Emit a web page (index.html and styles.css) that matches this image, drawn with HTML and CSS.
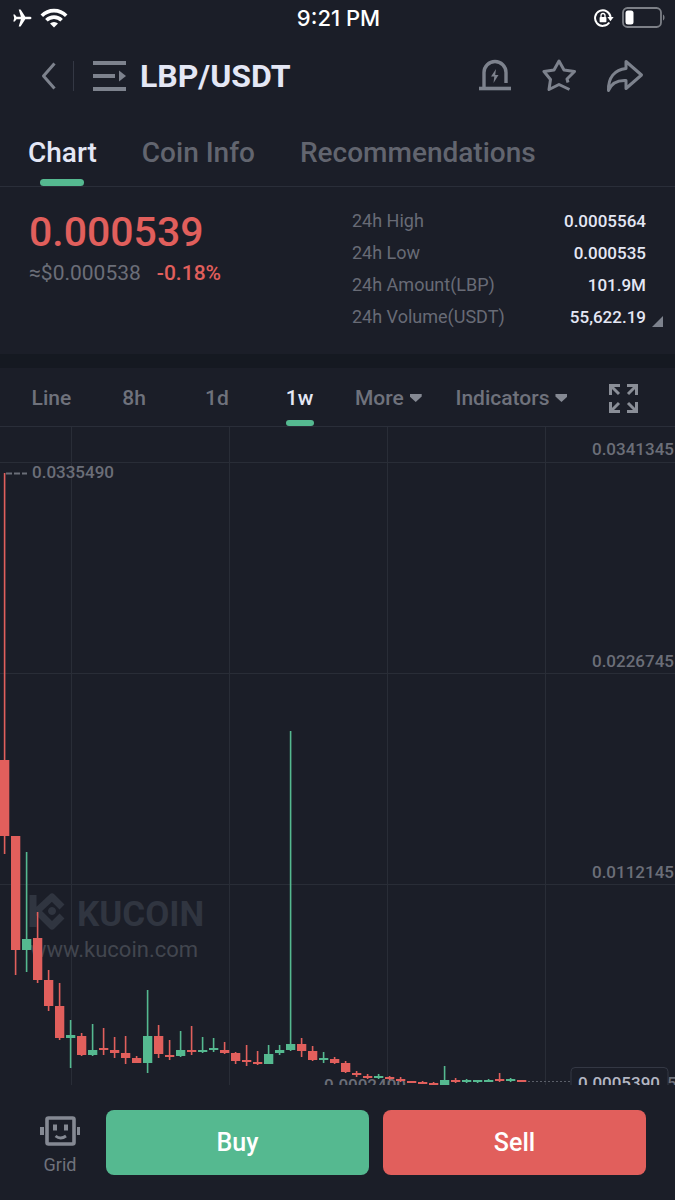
FILE: index.html
```html
<!DOCTYPE html>
<html lang="en">
<head>
    <meta charset="UTF-8">
    <meta name="viewport" content="width=device-width, initial-scale=1.0">
    <title>LBP/USDT</title>
    <link rel="stylesheet" href="styles.css">
</head>
<body>
    <div class="status-bar">
        <div class="status-side">
            <svg width="20" height="20" viewBox="0 0 20 20" fill="#fff"><path d="M19.5 10c0 .9-1 1.300-2 1.300h-4.200L8.600 18.600H6.700l2.200-7.300H4.500l-1.700 2.200H1.300L2.200 10 1.300 6.500h1.500l1.700 2.200h4.400L6.700 1.400h1.900l4.700 7.300h4.200c1 0 2 .4 2 1.300z"/></svg>
            <svg width="28" height="20" viewBox="0 0 28 20" fill="none" stroke="#fff" stroke-width="3.600"><path d="M1.800 7.700a17.300 17.300 0 0 1 24.400 0M6.400 12.300a10.800 10.800 0 0 1 15.200 0"/><path d="M14 19.600l-4-4a5.700 5.700 0 0 1 8 0z" fill="#fff" stroke="none"/></svg>
        </div>
        <div class="clock">9:21 PM</div>
        <div class="status-side right">
            <svg width="20" height="18" viewBox="0 0 20 18"><path d="M15.300 13.500A7.800 7.800 0 1 1 16.600 8" fill="none" stroke="#fff" stroke-width="2"/><path d="M13.400 8h6.200l-3.100 4.200z" fill="#fff"/><rect x="5.600" y="8" width="6.800" height="5.200" rx=".8" fill="#fff"/><path d="M7 8V6.500a2 2 0 0 1 4 0V8" fill="none" stroke="#fff" stroke-width="1.300"/></svg>
            <svg width="43" height="22" viewBox="0 0 43 22"><rect x="1" y="1" width="38" height="19" rx="4.500" fill="none" stroke="#7d8087" stroke-width="1.800"/><rect x="3.500" y="3.500" width="8" height="14" rx="2.500" fill="#fff"/><path d="M41 7.500c2 1 2 5 0 6z" fill="#7d8087"/></svg>
        </div>
    </div>

    <header class="header">
        <button class="icon-btn back" aria-label="Back">
            <svg width="16" height="30" viewBox="0 0 16 30"><path d="M13.500 2.500L2.500 15l11 12.500"/></svg>
        </button>
        <button class="icon-btn pairs" aria-label="Pairs">
            <svg width="34" height="30" viewBox="0 0 34 30"><path d="M0 2h33M0 15h22M0 28h33" stroke-width="4"/><path d="M26 9.500l7 5.500-7 5.500z" class="fill"/></svg>
        </button>
        <h1>LBP/USDT</h1>
        <button class="icon-btn" aria-label="Price alert">
            <svg width="34" height="34" viewBox="0 0 34 34"><path d="M6 29V13.500a11 11 0 0 1 22 0V24" stroke-width="3.400"/><path d="M1 29.500h32" stroke-width="3.600"/><path d="M18 10l-5 7.500h3.300l-.8 6.500 5-8h-3.300z" class="fill"/></svg>
        </button>
        <button class="icon-btn" aria-label="Favourite">
            <svg width="34" height="36" viewBox="0 0 34 36"><path d="M27.500 31.500L17 26.500 7 31.500l1.500-10L2 13.500l10-1.500 5-9 5 9 10.500 1.500-7.500 7.500 1 3.500"/></svg>
        </button>
        <button class="icon-btn" aria-label="Share">
            <svg width="38" height="34" viewBox="0 0 38 34"><path d="M20 2.500L35.500 16 20 29.500V21.500C11 21 5.500 24 2.500 31.500 2 19 8.500 10.500 20 9.500z"/></svg>
        </button>
    </header>

    <nav class="tabs">
        <a href="#" class="active">Chart</a>
        <a href="#">Coin Info</a>
        <a href="#">Recommendations</a>
    </nav>

    <section class="summary">
        <div class="price-box">
            <div class="price">0.000539</div>
            <div class="price-sub">≈$0.000538<span class="change">-0.18%</span></div>
        </div>
        <dl class="stats">
            <div><dt>24h High</dt><dd>0.0005564</dd></div>
            <div><dt>24h Low</dt><dd>0.000535</dd></div>
            <div><dt>24h Amount(LBP)</dt><dd>101.9M</dd></div>
            <div><dt>24h Volume(USDT)</dt><dd class="more">55,622.19</dd></div>
        </dl>
    </section>

    <div class="intervals">
        <button>Line</button>
        <button>8h</button>
        <button>1d</button>
        <button class="active">1w</button>
        <button class="drop">More</button>
        <button class="drop">Indicators</button>
        <button aria-label="Full screen">
            <svg width="29" height="29" viewBox="0 0 29 29" fill="none" stroke="#8a8e97" stroke-width="3"><path d="M1.500 11V1.500H11M2 2l8 8M18 1.500h9.500V11M27 2l-8 8M1.500 18v9.500H11M2 27l8-8M18 27.500h9.500V18M27 27l-8-8"/></svg>
        </button>
    </div>

    <svg class="chart" viewBox="0 0 675 658" role="img" aria-label="Weekly candles">
        <path class="grid-line" d="M0 35.500h675M0 246.500h675M0 457.500h675M71.500 0v658M229.500 0v658M387.500 0v658M545.500 0v658"/>

        <g class="axis">
            <text x="674" y="28" text-anchor="end">0.0341345</text>
            <text x="674" y="240" text-anchor="end">0.0226745</text>
            <text x="674" y="451" text-anchor="end">0.0112145</text>
            <text x="32" y="51">0.0335490</text>
            <text x="324" y="664">0.0002400</text>
            <text x="667" y="662">5</text>
        </g>
        <path class="marker" d="M6 46.500h21"/>

        <g class="watermark">
            <path d="M33 468v32M37 484l15-14 10 10M37 484l15 15 10-10" fill="none" stroke-width="7" stroke-linejoin="round"/>
            <circle cx="52" cy="484" r="3.500"/>
            <text x="77" y="499" class="brand">KUCOIN</text>
            <text x="30" y="530" class="site">www.kucoin.com</text>
        </g>

        <g id="candles"></g>

        <path class="last-line" d="M528 654.500h43"/>
        <rect class="last-box" x="571" y="640.500" width="97" height="30" rx="4"/>
        <text class="last-price" x="578" y="662">0.0005390</text>
    </svg>

    <footer class="actions">
        <button class="grid-btn">
            <svg width="40" height="31" viewBox="0 0 40 31"><rect x="7" y="2" width="27" height="26" rx="1.500" fill="none" stroke="#858993" stroke-width="3.600"/><path d="M0 11h4v8H0zM37 11h3v8h-3zM13 8.500h4v6h-4zM24 8.500h4v6h-4z" fill="#858993"/><path d="M15.500 20q5 4 10.500 0" fill="none" stroke="#858993" stroke-width="2.800"/></svg>
            <span>Grid</span>
        </button>
        <button class="trade buy">Buy</button>
        <button class="trade sell">Sell</button>
    </footer>

    <script src="chart.js"></script>
</body>
</html>
```
FILE: styles.css
```css
* {
    box-sizing: border-box;
}
body {
    margin: 0;
    background: #1b1e28;
    color: #e4e7f5;
    font-family: Roboto, "Liberation Sans", sans-serif;
}
button {
    padding: 0;
    border: none;
    background: none;
    color: inherit;
    font-family: inherit;
    cursor: pointer;
}
svg {
    display: block;
}

/* Status bar */
.status-bar {
    display: flex;
    align-items: center;
    height: 36px;
    padding: 0 10px 0 12px;
}
.status-side {
    display: flex;
    flex: 1;
    align-items: center;
    gap: 8px;
}
.status-side.right {
    justify-content: flex-end;
}
.clock {
    color: #fff;
    font-family: Inter, sans-serif;
    font-size: 22px;
    font-weight: 500;
}

/* Header */
.header {
    display: flex;
    align-items: center;
    gap: 30px;
    height: 80px;
    padding: 0 31px 0 41px;
}
.header h1 {
    flex: 1;
    margin: 0 0 0 -17px;
    font-size: 32px;
    font-weight: 700;
    line-height: 40px;
}
.icon-btn svg {
    fill: none;
    stroke: #7d828d;
    stroke-width: 3;
    stroke-linejoin: round;
}
.icon-btn .fill {
    fill: #7d828d;
    stroke: none;
}
.back {
    padding-right: 16px;
    border-right: 1px solid #343844;
}
.pairs {
    margin-left: -11px;
}

/* Tabs */
.tabs {
    display: flex;
    gap: 45px;
    height: 71px;
    padding: 0 28px;
    border-bottom: 1px solid #2a2e39;
}
.tabs a {
    position: relative;
    color: #62656f;
    font-size: 28px;
    font-weight: 500;
    line-height: 74px;
    text-decoration: none;
}
.tabs .active,
.intervals .active {
    color: #e4e7f5;
}
.tabs .active::after,
.intervals .active::after {
    content: "";
    position: absolute;
    bottom: 0;
    left: 50%;
    width: 44px;
    height: 7px;
    border-radius: 4px;
    background: #55b990;
    transform: translateX(-50%);
}

/* Price summary */
.summary {
    display: flex;
    justify-content: space-between;
    height: 181px;
    padding: 17px 29px 0;
    border-bottom: 14px solid #151921;
}
.price {
    color: #e15f5c;
    font-size: 41px;
    font-weight: 500;
    line-height: 56px;
}
.price-sub {
    color: #6b6e78;
    font-size: 21px;
    line-height: 26px;
}
.change {
    margin-left: 16px;
    color: #e15f5c;
    font-weight: 500;
}
.stats {
    width: 294px;
    margin: 1px 0 0;
}
.stats div {
    display: flex;
    justify-content: space-between;
    line-height: 32px;
}
.stats dt {
    color: #686b76;
    font-size: 18px;
}
.stats dd {
    position: relative;
    margin: 0;
    font-size: 17px;
    font-weight: 500;
}
.stats .more::after {
    content: "";
    position: absolute;
    right: -17px;
    bottom: 6px;
    border-bottom: 11px solid #7d828d;
    border-left: 11px solid transparent;
}

/* Intervals */
.intervals {
    display: grid;
    grid-template-columns: 83fr 83fr 83fr 83fr 95fr 152fr 73fr;
    align-items: center;
    height: 59px;
    padding: 0 15px 0 10px;
    border-bottom: 1px solid #2a2e39;
}
.intervals button {
    position: relative;
    display: flex;
    align-items: center;
    justify-content: center;
    height: 58px;
    padding-top: 2px;
    color: #6f727c;
    font-size: 21px;
    font-weight: 500;
}
.intervals .active::after {
    width: 28px;
    height: 6px;
}
.intervals .drop::after {
    content: "";
    width: 12px;
    height: 8px;
    margin-left: 6px;
    background: #858993;
    clip-path: polygon(0 0, 100% 0, 100% 30%, 50% 100%, 0 30%);
}

/* Chart */
.chart {
    width: 100%;
    height: auto;
}
.grid-line {
    fill: none;
    stroke: #292d37;
}
.axis {
    fill: #6b6e78;
    font-size: 17px;
    font-weight: 500;
}
.marker {
    stroke: #6b6e78;
    stroke-width: 2;
    stroke-dasharray: 6 2;
}
.watermark {
    fill: #303540;
    stroke: #303540;
}
.watermark text {
    stroke: none;
}
.brand {
    font-size: 35px;
    font-weight: 700;
}
.watermark .site {
    fill: #42464f;
    font-size: 22px;
}
.up {
    fill: #55b990;
}
.down {
    fill: #e15f5c;
}
.last-line {
    stroke: #5a5e68;
    stroke-dasharray: 2 2;
}
.last-box {
    fill: #1b1e28;
    stroke: #343844;
}
.last-price {
    fill: #b4b7c3;
    font-size: 17px;
    font-weight: 500;
}

/* Bottom actions */
.actions {
    display: flex;
    gap: 14px;
    padding: 25px 29px 25px 28px;
}
.grid-btn {
    display: flex;
    flex-direction: column;
    align-items: center;
    width: 64px;
    padding-top: 6px;
    color: #6f727c;
    font-size: 18px;
    line-height: 36px;
}
.trade {
    flex: 1;
    height: 65px;
    border-radius: 8px;
    color: #fff;
    font-size: 25px;
    font-weight: 500;
}
.buy {
    background: #55b990;
}
.sell {
    background: #e15f5c;
}
```
FILE: chart.js
```javascript
// [direction, high, low, body top, body bottom]
const candles = [
    ['down', 46, 427, 333, 409],
    ['down', 409, 548, 409, 523],
    ['up', 425, 545, 512, 523],
    ['down', 485, 556, 511, 553],
    ['down', 543, 584, 553, 579],
    ['down', 556, 613, 579, 611],
    ['up', 593, 641, 608, 611],
    ['down', 606, 629, 609, 628],
    ['up', 597, 629, 623, 628],
    ['down', 601, 628, 621, 623],
    ['down', 610, 631, 623, 626],
    ['down', 609, 637, 626, 631],
    ['down', 629, 636, 631, 636],
    ['up', 563, 646, 609, 636],
    ['down', 598, 631, 609, 627],
    ['down', 613, 633, 628, 630],
    ['up', 604, 630, 623, 629],
    ['down', 599, 628, 623, 625],
    ['up', 610, 626, 623, 625],
    ['up', 611, 625, 621, 623],
    ['down', 615, 627, 623, 626],
    ['down', 625, 637, 626, 634],
    ['down', 618, 639, 633, 635],
    ['down', 624, 638, 635, 637],
    ['up', 618, 637, 627, 637],
    ['up', 618, 628, 623, 626],
    ['up', 304, 624, 617, 623],
    ['down', 611, 630, 617, 624],
    ['down', 619, 634, 624, 633],
    ['up', 625, 636, 631, 633],
    ['down', 630, 637, 632, 636],
    ['down', 634, 646, 636, 645],
    ['down', 644, 650, 646, 648],
    ['down', 647, 652, 649, 651],
    ['up', 647, 652, 649, 651],
    ['down', 649, 653, 650, 652],
    ['down', 650, 655, 652, 654],
    ['down', 654, 656, 654, 656],
    ['down', 654, 657, 655, 657],
    ['down', 655, 658, 656, 658],
    ['up', 639, 658, 653, 658],
    ['down', 651, 656, 653, 655],
    ['up', 652, 656, 653, 655],
    ['up', 653, 656, 653, 655],
    ['up', 652, 655, 653, 655],
    ['down', 646, 655, 652, 654],
    ['up', 651, 655, 652, 654],
    ['down', 653, 655, 653, 655]
];

const step = 11;
const group = document.getElementById('candles');

function addRect(x, y, width, height, direction) {
    const rect = document.createElementNS('http://www.w3.org/2000/svg', 'rect');
    rect.setAttribute('x', x);
    rect.setAttribute('y', y);
    rect.setAttribute('width', width);
    rect.setAttribute('height', height);
    rect.setAttribute('class', direction);
    group.appendChild(rect);
}

candles.forEach(([direction, high, low, top, bottom], i) => {
    addRect(i * step + 3.8, high, 1.6, low - high, direction);
    addRect(i * step, top, 9.3, bottom - top, direction);
});
```
